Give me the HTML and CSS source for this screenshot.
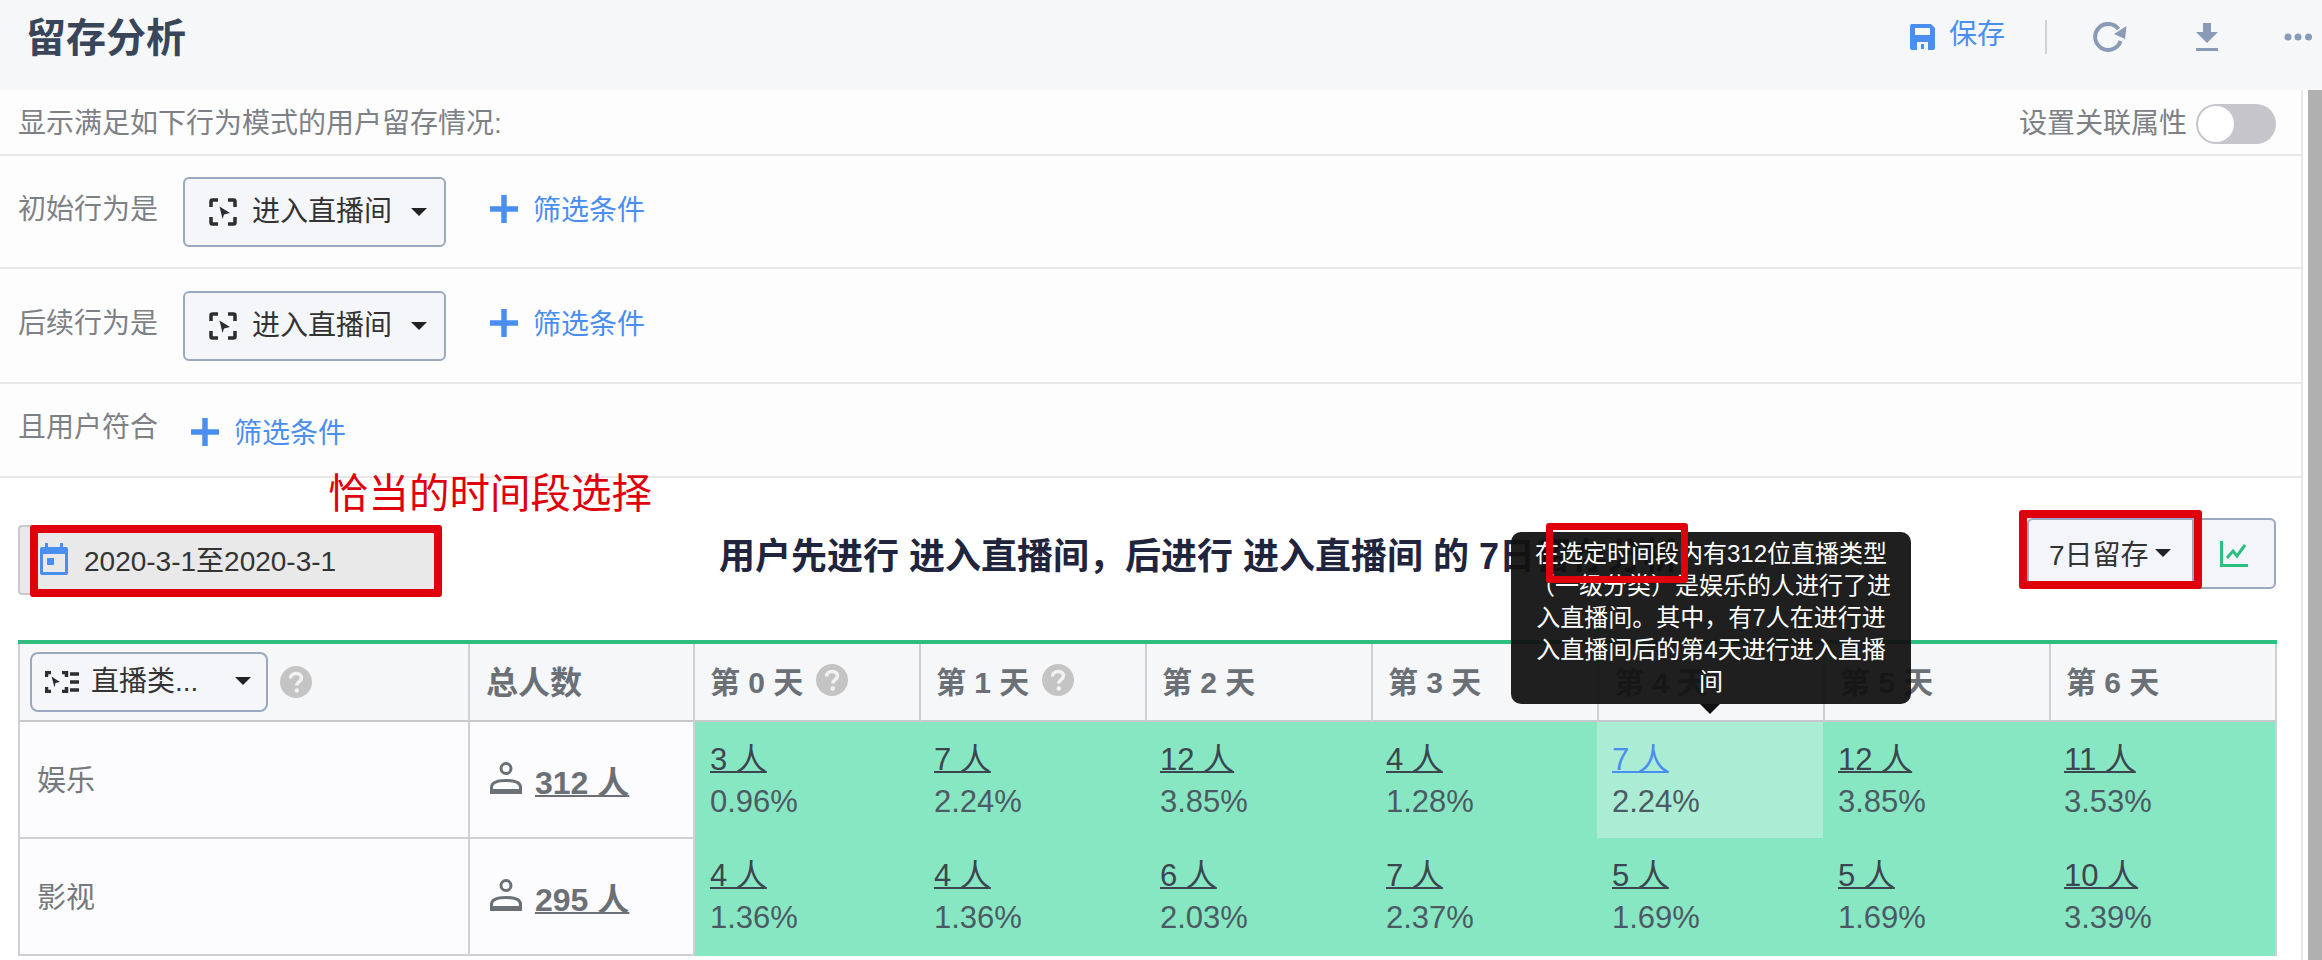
FILE: index.html
```html
<!DOCTYPE html>
<html lang="zh-CN">
<head>
<meta charset="utf-8">
<title>留存分析</title>
<link rel="stylesheet" href="styles.css">
</head>
<body>
<svg class="defs" aria-hidden="true">
  <symbol id="ev" viewBox="0 0 28 28">
    <path d="M9 2H3.500A1.500 1.500 0 0 0 2 3.500V9M19 2h5.500A1.500 1.500 0 0 1 26 3.500V9M9 26H3.500A1.500 1.500 0 0 1 2 24.500V19M19 26h5.500a1.500 1.500 0 0 0 1.500-1.500V19" fill="none" stroke="currentColor" stroke-width="3.500"/>
    <path d="M10.500 8.500L21 15l-6 1.500-1.500 4.500z" fill="currentColor"/>
  </symbol>
  <symbol id="help" viewBox="0 0 32 32">
    <circle cx="16" cy="16" r="16" fill="#c4c4c4"/>
    <path d="M10.500 12.500c0-3 2.400-5 5.700-5s5.300 1.900 5.300 4.500c0 3.700-4.700 3.700-4.700 7.500" fill="none" stroke="#f2f2f2" stroke-width="3.500"/>
    <circle cx="16.800" cy="24.500" r="2.200" fill="#f2f2f2"/>
  </symbol>
  <symbol id="user" viewBox="0 0 32 32">
    <circle cx="16" cy="6.500" r="5" fill="none" stroke="currentColor" stroke-width="3"/>
    <path d="M1.500 30.500v-5C1.500 20.500 8 18.500 16 18.500s14.500 2 14.500 7v5z" fill="none" stroke="currentColor" stroke-width="3"/>
    <path d="M1.500 29h29" stroke="currentColor" stroke-width="4"/>
  </symbol>
  <symbol id="plus" viewBox="0 0 28 28">
    <path d="M14 0v28M0 14h28" fill="none" stroke="currentColor" stroke-width="5.500"/>
  </symbol>
</svg>

<header class="top">
  <h1 class="page-title">留存分析</h1>
  <div class="top-actions">
    <svg class="ico-save" viewBox="0 0 25 26"><path fill-rule="evenodd" d="M2 0h19l4 4v20a2 2 0 0 1-2 2H2a2 2 0 0 1-2-2V2a2 2 0 0 1 2-2zM5 4v7h15V4zM7 18v8h11v-8zM11 20h3v5h-3z" fill="#4a8ef0"/></svg>
    <span class="save-text">保存</span>
    <span class="top-divider"></span>
    <svg class="ico-refresh" viewBox="0 0 34 30"><path d="M25.500 7A13 13 0 1 0 27.500 19" fill="none" stroke="#8a9bb8" stroke-width="4"/><path d="M33.500 4L32 17 21 12z" fill="#8a9bb8"/></svg>
    <svg class="ico-down" viewBox="0 0 22 28"><path d="M7 0h8v9h7L11 20 0 9h7zM0 25h22v3H0z" fill="#8a9bb8"/></svg>
    <svg class="ico-dots" viewBox="0 0 28 8"><circle cx="4" cy="4" r="3.500" fill="#8a9bb8"/><circle cx="14" cy="4" r="3.500" fill="#8a9bb8"/><circle cx="24.500" cy="4" r="3.500" fill="#8a9bb8"/></svg>
  </div>
</header>

<div class="body-wrap">
  <main class="content">
    <section class="cond">
      <div class="row row-intro">
        <span class="label">显示满足如下行为模式的用户留存情况:</span>
        <span class="toggle-wrap">
          <span class="label">设置关联属性</span>
          <span class="toggle"><span class="knob"></span></span>
        </span>
      </div>
      <div class="row row-a">
        <span class="label lift">初始行为是</span>
        <button class="select"><svg class="ico-ev"><use href="#ev"/></svg><span>进入直播间</span><i class="caret"></i></button>
        <span class="add add-wide"><svg class="ico-plus"><use href="#plus"/></svg><span class="add-text">筛选条件</span></span>
      </div>
      <div class="row row-b">
        <span class="label lift">后续行为是</span>
        <button class="select"><svg class="ico-ev"><use href="#ev"/></svg><span>进入直播间</span><i class="caret"></i></button>
        <span class="add add-wide"><svg class="ico-plus"><use href="#plus"/></svg><span class="add-text">筛选条件</span></span>
      </div>
      <div class="row row-c">
        <span class="label lift">且用户符合</span>
        <span class="add add-narrow"><svg class="ico-plus"><use href="#plus"/></svg><span class="add-text">筛选条件</span></span>
      </div>
    </section>

    <section class="report">
      <div class="toolbar">
        <div class="date">
          <svg class="ico-cal" viewBox="0 0 28 32"><path fill-rule="evenodd" d="M5 0h3v4h12V0h3v4h3a2 2 0 0 1 2 2v24a2 2 0 0 1-2 2H2a2 2 0 0 1-2-2V6a2 2 0 0 1 2-2h3zM3 11v18h22V11zM7 15h7v7H7z" fill="#4a8ef0"/></svg>
          <span>2020-3-1至2020-3-1</span>
        </div>
        <h2 class="report-title">用户先进行 进入直播间，后进行 进入直播间 的 7日留存分析</h2>
        <div class="btn-group">
          <span class="btn-range">7日留存<i class="caret caret-s"></i></span>
          <span class="btn-chart"><svg class="ico-chart" viewBox="0 0 28 26"><path d="M1.500 0v24.500H28" fill="none" stroke="#2cc080" stroke-width="3"/><path d="M7 17l6-7 4 5 8-11" fill="none" stroke="#2cc080" stroke-width="3"/></svg></span>
        </div>
      </div>

      <div class="table">
        <div class="thead">
          <div class="th th-first">
            <button class="select select-s"><svg class="ico-ev-s" viewBox="0 0 34 22"><path d="M6 1.500H1.500V6M17 1.500h4.500V6M6 20.500H1.500V16M17 20.500h4.500V16" fill="none" stroke="currentColor" stroke-width="3.500"/><path d="M6.500 5.500l8.500 5.500-4.500 1-1 4.500z" fill="currentColor"/><path d="M25 3h9M25 11h9M25 19h9" stroke="currentColor" stroke-width="3.500"/></svg><span>直播类...</span><i class="caret caret-right"></i></button>
            <svg class="ico-help"><use href="#help"/></svg>
          </div>
          <div class="th th-total">总人数</div>
          <div class="th">第 0 天<svg class="ico-help"><use href="#help"/></svg></div>
          <div class="th">第 1 天<svg class="ico-help"><use href="#help"/></svg></div>
          <div class="th">第 2 天</div>
          <div class="th">第 3 天</div>
          <div class="th">第 4 天</div>
          <div class="th">第 5 天</div>
          <div class="th">第 6 天</div>
        </div>

        <div class="tr">
          <div class="td td-name">娱乐</div>
          <div class="td td-total"><svg class="ico-user"><use href="#user"/></svg><a class="total">312 人</a></div>
          <div class="day"><a>3 人</a><span>0.96%</span></div>
          <div class="day"><a>7 人</a><span>2.24%</span></div>
          <div class="day"><a>12 人</a><span>3.85%</span></div>
          <div class="day"><a>4 人</a><span>1.28%</span></div>
          <div class="day day-hover"><a>7 人</a><span>2.24%</span></div>
          <div class="day"><a>12 人</a><span>3.85%</span></div>
          <div class="day day-last"><a>11 人</a><span>3.53%</span></div>
        </div>
        <div class="tr">
          <div class="td td-name">影视</div>
          <div class="td td-total"><svg class="ico-user"><use href="#user"/></svg><a class="total">295 人</a></div>
          <div class="day"><a>4 人</a><span>1.36%</span></div>
          <div class="day"><a>4 人</a><span>1.36%</span></div>
          <div class="day"><a>6 人</a><span>2.03%</span></div>
          <div class="day"><a>7 人</a><span>2.37%</span></div>
          <div class="day"><a>5 人</a><span>1.69%</span></div>
          <div class="day"><a>5 人</a><span>1.69%</span></div>
          <div class="day day-last"><a>10 人</a><span>3.39%</span></div>
        </div>
      </div>
    </section>

    <div class="tooltip">在选定时间段内有312位直播类型（一级分类）是娱乐的人进行了进入直播间。其中，有7人在进行进入直播间后的第4天进行进入直播间</div>
    <div class="note">恰当的时间段选择</div>
    <div class="mark mark-date"></div>
    <div class="mark mark-tip"></div>
    <div class="mark mark-range"></div>
  </main>
  <div class="scrollbar"></div>
</div>
</body>
</html>
```

FILE: styles.css
```css
* { box-sizing: border-box; }
html, body { margin: 0; padding: 0; height: 100%; overflow: hidden; }
body {
  background: #fff;
  color: #333;
  font-family: "Liberation Sans", "Noto Sans CJK SC", sans-serif;
  font-size: 28px;
}
.defs { display: none; }
h1, h2 { margin: 0; }
button { font: inherit; color: inherit; margin: 0; }

/* top bar */
.top {
  height: 90px;
  background: #f6f7f9;
  display: flex;
  align-items: center;
  padding: 0 10px 16px 26px;
}
.page-title { font-size: 40px; line-height: 56px; font-weight: 700; color: #39465a; margin-top: 2px; }
.top-actions { margin-left: auto; display: flex; align-items: center; }
.ico-save { width: 25px; height: 26px; }
.save-text { margin-left: 14px; width: 56px; color: #4a8ef0; line-height: 40px; margin-top: -4px; }
.top-divider { width: 2px; height: 34px; background: #cfd2d6; margin-left: 40px; }
.ico-refresh { width: 34px; height: 30px; margin-left: 46px; }
.ico-down { width: 22px; height: 28px; margin-left: 69px; }
.ico-dots { width: 28px; height: 8px; margin-left: 66px; }

/* layout */
.body-wrap { display: flex; height: 870px; }
.content {
  position: relative;
  width: 2303px;
  height: 870px;
  border-right: 2px solid #e6e7e9;
  overflow: hidden;
}
.scrollbar { width: 14px; margin-left: 5px; background: #b0b0b0; }

/* condition rows */
.cond { background: #fdfdfe; }
.row {
  display: flex;
  align-items: center;
  padding: 0 25px 0 18px;
  border-bottom: 2px solid #e6e7e9;
}
.row-intro { height: 66px; padding-top: 4px; }
.row-a { height: 113px; padding-top: 1px; }
.row-b { height: 115px; }
.row-c { height: 94px; }
.label { color: #7d8185; line-height: 40px; white-space: nowrap; }
.lift { margin-bottom: 4px; }
.toggle-wrap { margin-left: auto; display: flex; align-items: center; gap: 9px; }
.toggle {
  width: 80px;
  height: 40px;
  border-radius: 20px;
  background: #c6c5cb;
  padding: 2px;
  display: flex;
}
.knob { width: 36px; height: 36px; border-radius: 50%; background: #fff; }

.select {
  display: flex;
  align-items: center;
  width: 263px;
  height: 70px;
  margin-left: 25px;
  padding: 0 0 0 24px;
  background: #f5f6fa;
  border: 2px solid #9aa9c0;
  border-radius: 6px;
  color: #333;
  line-height: 40px;
}
.select > span { white-space: nowrap; }
.ico-ev { width: 28px; height: 28px; margin-right: 15px; color: #2b2d30; }
.caret {
  width: 0;
  height: 0;
  margin-left: 19px;
  border-left: 8px solid transparent;
  border-right: 8px solid transparent;
  border-top: 8px solid #222;
}
.add { display: flex; align-items: center; color: #4a8ef0; line-height: 40px; }
.add-wide { margin-left: 44px; margin-bottom: 6px; }
.add-narrow { margin-left: 33px; margin-top: 4px; }
.add-text { margin-top: 4px; }
.ico-plus { width: 28px; height: 28px; margin-right: 15px; }

/* toolbar */
.report { background: #fff; padding: 0 25px 0 18px; }
.toolbar { height: 162px; display: flex; align-items: flex-start; }
.date {
  display: flex;
  align-items: center;
  width: 419px;
  height: 70px;
  margin-top: 47px;
  padding-left: 20px;
  padding-bottom: 2px;
  background: #e9e9e9;
  border: 2px solid #c9c9c9;
  border-radius: 4px;
  color: #333;
}
.ico-cal { width: 28px; height: 32px; margin-right: 16px; }
.report-title {
  margin: 54px 0 0 282px;
  font-size: 36px;
  line-height: 50px;
  font-weight: 700;
  color: #20243c;
  white-space: nowrap;
}
.btn-group {
  margin: 40px 0 0 auto;
  display: flex;
  width: 249px;
  height: 71px;
  background: #f4f5fa;
  border: 2px solid #9aa9c0;
  border-radius: 6px;
}
.btn-range {
  display: flex;
  align-items: center;
  width: 165px;
  padding-left: 20px;
  padding-bottom: 2px;
  border-right: 2px solid #9aa9c0;
  color: #333;
}
.caret-s { margin-left: 6px; }
.btn-chart { flex: 1; display: flex; align-items: center; justify-content: center; }
.ico-chart { width: 28px; height: 26px; }

/* table */
.table { border-top: 4px solid #2cbf80; width: 2259px; }
.thead, .tr { display: grid; }
.thead { grid-template-columns: 452px 225px repeat(7, 226px); height: 78px; background: #f6f7f9; }
.tr { grid-template-columns: 452px 225px 224px repeat(5, 226px) 228px; height: 117px; }
.th {
  display: flex;
  align-items: center;
  padding-left: 15px;
  padding-bottom: 4px;
  border-right: 2px solid #cfd0d4;
  border-bottom: 2px solid #c8c8cc;
  font-size: 30px;
  font-weight: 700;
  color: #6a7076;
  white-space: nowrap;
}
.th-first { border-left: 2px solid #cfd0d4; padding-left: 10px; padding-bottom: 0; }
.th-total { font-size: 32px; padding-left: 16px; }
.select-s {
  width: 238px;
  height: 60px;
  margin: 0;
  padding: 0 15px 0 13px;
  border-radius: 8px;
  font-size: 28px;
  font-weight: 400;
}
.ico-ev-s { width: 34px; height: 22px; margin-right: 12px; color: #2b2d30; }
.caret-right { margin-left: auto; margin-bottom: 2px; }
.ico-help { width: 32px; height: 32px; margin-left: 13px; }
.th-first .ico-help { margin-left: 12px; }

.td { display: flex; align-items: center; border-right: 2px solid #cfd0d4; border-bottom: 2px solid #cfd0d4; background: #fcfcfe; }
.td-name { border-left: 2px solid #cfd0d4; padding: 0 0 4px 17px; color: #75797d; font-size: 29px; }
.td-total { padding-left: 20px; color: #6a7076; }
.ico-user { width: 32px; height: 32px; margin-right: 13px; margin-top: -4px; }
.total { font-size: 32px; font-weight: 700; color: #6a7076; text-decoration: underline; text-decoration-thickness: 2px; }

.day {
  display: flex;
  flex-direction: column;
  align-items: flex-start;
  padding: 18px 0 0 15px;
  background: #88e7c3;
  font-size: 31px;
  line-height: 44px;
}
.tr + .tr .day { padding-top: 17px; }
.day a { color: #3b4650; line-height: 40px; text-decoration: underline; text-decoration-thickness: 2px; }
.day span { color: #4c5a63; }
.day-hover { background: linear-gradient(#abedd4 116px, #88e7c3 116px); }
.day-hover a { color: #4a8ef0; }
.day-last { border-right: 2px solid #cfd0d4; }

/* overlays */
.tooltip {
  position: absolute;
  left: 1511px;
  top: 442px;
  width: 400px;
  height: 172px;
  padding: 6px 20px;
  border-radius: 10px;
  background: rgba(17, 17, 17, 0.94);
  color: #fff;
  font-size: 24px;
  line-height: 32px;
  text-align: center;
}
.tooltip::after {
  content: "";
  position: absolute;
  left: 189px;
  top: 100%;
  border-left: 10px solid transparent;
  border-right: 10px solid transparent;
  border-top: 10px solid #111;
}
.note {
  position: absolute;
  left: 328px;
  top: 376px;
  font-size: 40.5px;
  line-height: 56px;
  color: #e0000b;
  white-space: nowrap;
}
.mark { position: absolute; border: 8px solid #e0000b; border-radius: 3px; }
.mark-date { left: 30px; top: 435px; width: 412px; height: 72px; }
.mark-tip { left: 1546px; top: 433px; width: 142px; height: 60px; border-width: 7px; }
.mark-range { left: 2019px; top: 420px; width: 183px; height: 79px; }
```
